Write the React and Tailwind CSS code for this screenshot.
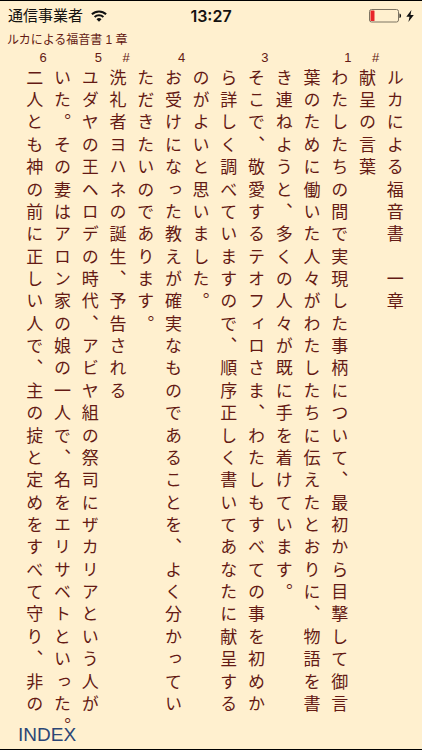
import React from 'react';

// Verse columns, first one is the rightmost
const COLUMNS = [
  { mark: '', text: 'ルカによる福音書　一章' },
  { mark: '#', text: '献呈の言葉' },
  { mark: '1', text: 'わたしたちの間で実現した事柄について、最初から目撃して御言' },
  { mark: '', text: '葉のために働いた人々がわたしたちに伝えたとおりに、物語を書' },
  { mark: '', text: 'き連ねようと、多くの人々が既に手を着けています。' },
  { mark: '3', text: 'そこで、敬愛するテオフィロさま、わたしもすべての事を初めか' },
  { mark: '', text: 'ら詳しく調べていますので、順序正しく書いてあなたに献呈する' },
  { mark: '', text: 'のがよいと思いました。' },
  { mark: '4', text: 'お受けになった教えが確実なものであることを、よく分かってい' },
  { mark: '', text: 'ただきたいのであります。' },
  { mark: '#', text: '洗礼者ヨハネの誕生、予告される' },
  { mark: '5', text: 'ユダヤの王ヘロデの時代、アビヤ組の祭司にザカリアという人が' },
  { mark: '', text: 'いた。その妻はアロン家の娘の一人で、名をエリサベトといった。' },
  { mark: '6', text: '二人とも神の前に正しい人で、主の掟と定めをすべて守り、非の' },
];

const WifiIcon = () => (
  <svg viewBox="0 0 16 12" className="w-4 h-3" fill="none" stroke="#111" aria-hidden="true">
    <path d="M0.9 4.3 A10.2 10.2 0 0 1 15.1 4.3" strokeWidth="2" />
    <path d="M3.6 7.1 A6.4 6.4 0 0 1 12.4 7.1" strokeWidth="2" />
    <path d="M8 11.8 L5.5 9.2 A3.6 3.6 0 0 1 10.5 9.2 Z" fill="#111" stroke="none" />
  </svg>
);

const BatteryIcon = () => (
  <svg viewBox="0 0 33 14" className="w-[33px] h-3.5" aria-hidden="true">
    <rect x="0.5" y="0.5" width="29" height="12.5" rx="2" fill="none" stroke="#7d7462" />
    <rect x="1.5" y="1.5" width="4" height="10.5" rx="0.5" fill="#e8262b" />
    <path d="M30.5 4.5 C32.6 5 32.6 8.5 30.5 9 Z" fill="#111" />
  </svg>
);

const BoltIcon = () => (
  <svg viewBox="0 0 8 12" className="w-2 h-3" fill="#111" aria-hidden="true">
    <path d="M5.4 0 L0.3 6.8 H3.5 L2.4 12 L7.8 4.9 H4.5 Z" />
  </svg>
);

const StatusBar = () => (
  <div className="grid grid-cols-[1fr_auto_1fr] items-center h-[29px] px-2 text-[15px] leading-5 text-[#151210]">
    <div className="flex items-center gap-2">
      <span>通信事業者</span>
      <WifiIcon />
    </div>
    <span className="font-['Inter',sans-serif] text-base font-semibold">13:27</span>
    <div className="flex items-center justify-end gap-1">
      <BatteryIcon />
      <BoltIcon />
    </div>
  </div>
);

const VerseColumn = ({ mark, text }) => (
  <div className="flex-1 flex flex-col">
    <div className="h-4 text-right text-[13px] leading-4">{mark}</div>
    <p className="flex-1 grid grid-rows-[repeat(30,minmax(0,1fr))] text-[17px] leading-none">
      {[...text].map((char, i) => (
        <span key={i} className="flex items-center justify-center [writing-mode:vertical-rl]">
          {char}
        </span>
      ))}
    </p>
  </div>
);

const App = () => {
  return (
    <div
      lang="ja"
      className="min-h-screen flex flex-col border-y border-black bg-[#fff0cf] text-[#641a14] font-['Liberation_Sans','Noto_Sans_CJK_JP',sans-serif]"
    >
      <StatusBar />

      <h1 className="pl-[7px] text-[12px] leading-5">ルカによる福音書 1 章</h1>

      {/* Verses, right to left */}
      <main className="flex-1 flex flex-row-reverse pl-[19px] pr-[15px]">
        {COLUMNS.map((column, i) => (
          <VerseColumn key={i} mark={column.mark} text={column.text} />
        ))}
      </main>

      {/* Footer */}
      <footer className="-mt-4 px-[18px]">
        <button type="button" className="block text-[19px] leading-7 text-[#2b4676]">
          INDEX
        </button>
      </footer>
    </div>
  );
};

export default App;
